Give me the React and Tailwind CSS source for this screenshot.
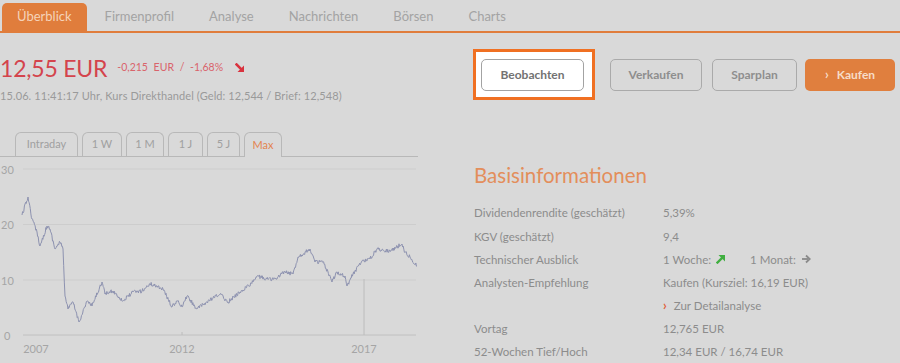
import React from "react";

const KEY = [[22,216],[28,198],[32,220],[37,233],[40,247],[47,227],[50,230],[55,250],[60,243],[63,250],[65,297],[68,310],[73,303],[79,323],[87,302],[92,307],[102,283],[105,295],[113,292],[123,302],[133,293],[142,292],[150,285],[157,287],[163,290],[172,308],[177,302],[182,308],[187,297],[197,310],[207,303],[220,295],[228,303],[240,293],[253,283],[257,277],[267,280],[277,280],[283,273],[293,275],[298,258],[310,250],[315,263],[323,263],[332,283],[337,273],[345,277],[347,287],[353,275],[362,262],[370,260],[377,250],[390,252],[402,245],[405,253],[410,258],[417,267]];

function buildPath() {
  let s = 12345;
  const r = () => {
    s = (s * 16807) % 2147483647;
    return s / 2147483647;
  };
  const pts = [];
  for (let i = 0; i < KEY.length - 1; i++) {
    const [x0, y0] = KEY[i];
    const [x1, y1] = KEY[i + 1];
    const steps = Math.max(2, Math.round((x1 - x0) / 0.6));
    for (let k = 0; k < steps; k++) {
      const t = k / steps;
      const x = x0 + (x1 - x0) * t;
      const y = y0 + (y1 - y0) * t + (k === 0 ? 0 : (r() - 0.5) * 4);
      pts.push([x, y]);
    }
  }
  pts.push(KEY[KEY.length - 1]);
  return pts.map((p, i) => (i ? "L" : "M") + p[0].toFixed(2) + " " + p[1].toFixed(2)).join(" ");
}
const LINE = buildPath();

const FONT = { fontFamily: "Lato, 'Open Sans', Arial, sans-serif" };

function ArrowDownRight() {
  return (
    <svg width="10" height="10" viewBox="0 0 10 10" className="inline-block">
      <path d="M1.5 1.5 L7 7" stroke="#d9333f" strokeWidth="2.6" strokeLinecap="square" />
      <path d="M2.5 9 H9 V2.5 Z" fill="#d9333f" />
    </svg>
  );
}

function ArrowUpRight() {
  return (
    <svg width="10" height="10" viewBox="0 0 10 10" className="inline-block">
      <path d="M1.5 8.5 L7 3" stroke="#3fae3f" strokeWidth="2.4" strokeLinecap="square" />
      <path d="M2.5 1 H9 V7.5 Z" fill="#3fae3f" />
    </svg>
  );
}

function ArrowRight() {
  return (
    <svg width="10" height="10" viewBox="0 0 10 10" className="inline-block">
      <path d="M1 5 H7" stroke="#8a8a8a" strokeWidth="1.8" />
      <path d="M5 1.5 L8.8 5 L5 8.5" stroke="#8a8a8a" strokeWidth="1.8" fill="none" />
    </svg>
  );
}

const TABS = ["Firmenprofil", "Analyse", "Nachrichten", "Börsen", "Charts"];

const RANGE = [
  { t: "Intraday", w: "w-[63px]" },
  { t: "1 W", w: "w-[40px]" },
  { t: "1 M", w: "w-[38px]" },
  { t: "1 J", w: "w-[35px]" },
  { t: "5 J", w: "w-[33px]" },
];

function Row({ label, children }) {
  return (
    <div className="flex h-[23.15px] items-center text-[11.5px] text-[#8c8c8c]">
      <div className="w-[189px]">{label}</div>
      <div className="flex items-center">{children}</div>
    </div>
  );
}

export default function App() {
  return (
    <div className="w-[900px] h-[363px] overflow-hidden bg-[#d9d9d9]" style={FONT}>
      {/* main tabs */}
      <div className="flex items-end h-[33px] border-b-2 border-[#e07d3c]">
        <div className="ml-[2px] h-[28px] px-[15px] flex items-center rounded-t-[5px] bg-[#e07d3c] text-[13px] text-[#f5d3b9]">
          Überblick
        </div>
        {TABS.map((t) => (
          <div key={t} className="h-[28px] px-[17px] ml-[1px] flex items-center text-[13px] text-[#a3a3a3]">
            {t}
          </div>
        ))}
      </div>

      {/* top row */}
      <div className="flex items-start">
        <div className="w-[473px] pt-[21px]">
          <div className="flex items-center">
            <span className="text-[23px] leading-[28px] text-[#d4444c] tracking-[-0.2px]">12,55 EUR</span>
            <span className="ml-[10px] text-[10.5px] text-[#d9636b] [word-spacing:3px]">-0,215 EUR / -1,68%</span>
            <span className="ml-[12px] flex items-center"><ArrowDownRight /></span>
          </div>
          <div className="mt-[7px] text-[11px] leading-[14px] text-[#9a9a9a] tracking-[0.1px]">
            15.06. 11:41:17 Uhr, Kurs Direkthandel (Geld: 12,544 / Brief: 12,548)
          </div>
        </div>
        <div className="pt-[16px] flex items-center">
          <div className="border-[3px] border-[#f07022] bg-white pl-[5px] pr-[8px] pt-[7px] pb-[6px]">
            <div className="w-[103px] h-[32px] rounded-[5px] border border-[#a3a3a3] flex items-center justify-center text-[12px] font-bold text-[#727272]">
              Beobachten
            </div>
          </div>
          <div className="ml-[15px] w-[92px] h-[32px] rounded-[5px] border-[1.5px] border-[#aaaaaa] flex items-center justify-center text-[12px] font-bold text-[#8e8e8e]">
            Verkaufen
          </div>
          <div className="ml-[10px] w-[85px] h-[32px] rounded-[5px] border-[1.5px] border-[#aaaaaa] flex items-center justify-center text-[12px] font-bold text-[#8e8e8e]">
            Sparplan
          </div>
          <div className="ml-[8px] w-[90px] h-[32px] rounded-[5px] bg-[#e07f3e] flex items-center justify-center text-[12px] font-bold text-[#f7dcc8]">
            <span className="mr-[8px] text-[13px]">›</span>Kaufen
          </div>
        </div>
      </div>

      {/* second row */}
      <div className="flex">
        <div className="w-[420px] mt-[29px]">
          <div className="flex items-end h-[25px] w-[418px] border-b border-[#b8b8b8] pl-[15px] gap-[4px]">
            {RANGE.map((r) => (
              <div
                key={r.t}
                className={`${r.w} h-[24px] rounded-t-[6px] border border-b-0 border-[#b8b8b8] flex items-center justify-center text-[11px] text-[#a0a0a0]`}
              >
                {r.t}
              </div>
            ))}
            <div className="w-[38px] h-[25px] -mb-px rounded-t-[6px] border border-b-0 border-[#b8b8b8] bg-[#d9d9d9] flex items-center justify-center text-[11px] text-[#e38450]">
              Max
            </div>
          </div>
          <svg width="420" height="205" viewBox="0 158 420 205" className="block">
            {[170, 225.5, 281].map((y) => (
              <line key={y} x1="23" x2="416" y1={y} y2={y} stroke="#cdcdcd" strokeWidth="1" />
            ))}
            <line x1="23" x2="416" y1="336" y2="336" stroke="#c0c0c0" strokeWidth="1" />
            <line x1="364" x2="364" y1="280" y2="336" stroke="#bcbcbc" strokeWidth="1" />
            <line x1="182" x2="182" y1="333" y2="336" stroke="#bcbcbc" strokeWidth="1" />
            <g fontSize="11" fill="#a5a5a5" fontFamily="Lato, Arial, sans-serif">
              <text x="1" y="175">30</text>
              <text x="1" y="230">20</text>
              <text x="1" y="285.5">10</text>
              <text x="4" y="340.5">0</text>
              <text x="36" y="354" textAnchor="middle">2007</text>
              <text x="182" y="354" textAnchor="middle">2012</text>
              <text x="364" y="354" textAnchor="middle">2017</text>
            </g>
            <path d={LINE} stroke="#8d92b0" strokeWidth="1" fill="none" strokeLinejoin="round" />
          </svg>
        </div>

        <div className="ml-[54px] pt-[60px] flex-1">
          <div className="text-[20.5px] leading-[24px] text-[#e38e5b]">Basisinformationen</div>
          <div className="mt-[14.5px]">
            <Row label="Dividendenrendite (geschätzt)">5,39%</Row>
            <Row label="KGV (geschätzt)">9,4</Row>
            <Row label="Technischer Ausblick">
              <span>1 Woche:</span>
              <span className="ml-[5px] flex"><ArrowUpRight /></span>
              <span className="ml-[24px]">1 Monat:</span>
              <span className="ml-[5px] flex"><ArrowRight /></span>
            </Row>
            <Row label="Analysten-Empfehlung">Kaufen (Kursziel: 16,19 EUR)</Row>
            <Row label="">
              <span className="text-[#e0603a] text-[13px] font-bold mr-[7px]">›</span>
              <span>Zur Detailanalyse</span>
            </Row>
            <Row label="Vortag">12,765 EUR</Row>
            <Row label="52-Wochen Tief/Hoch">12,34 EUR / 16,74 EUR</Row>
          </div>
        </div>
      </div>
    </div>
  );
}
